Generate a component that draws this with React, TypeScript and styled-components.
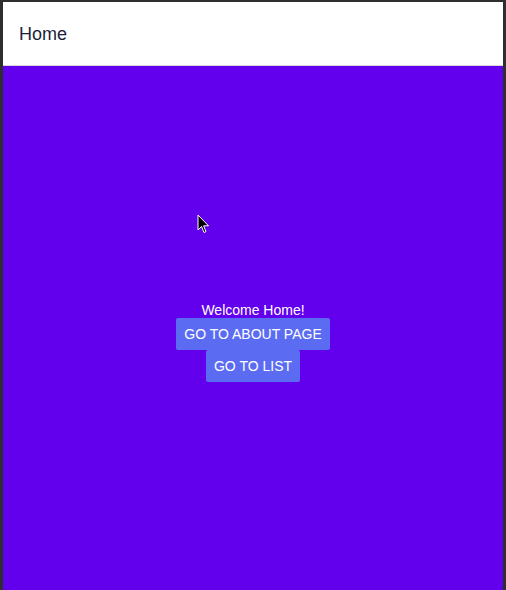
import React from "react";
import styled, { createGlobalStyle } from "styled-components";

const Global = createGlobalStyle`
  html, body { margin: 0; padding: 0; background: #2e2e2e; }
  body { font-family: "Liberation Sans", Arial, sans-serif; }
`;

const Frame = styled.div`
  box-sizing: border-box;
  width: 506px;
  height: 590px;
  padding: 2px 3px 0 3px;
  background: #2e2e2e;
  overflow: hidden;
`;

const Screen = styled.div`
  position: relative;
  display: flex;
  flex-direction: column;
  height: 100%;
  background: #6200ee;
`;

const Header = styled.header`
  box-sizing: border-box;
  height: 64px;
  display: flex;
  align-items: center;
  padding: 2px 16px 0;
  background: #ffffff;
  border-bottom: 1px solid #d8d8d8;
`;

const Title = styled.h1`
  margin: 0;
  font-size: 18px;
  font-weight: 400;
  color: #1b1f3b;
`;

const Content = styled.main`
  flex: 1;
  display: flex;
  flex-direction: column;
  align-items: center;
  padding-top: 236px;
`;

const Welcome = styled.div`
  color: #ffffff;
  font-size: 14px;
  line-height: 16px;
`;

const Button = styled.button`
  box-sizing: border-box;
  height: 32px;
  padding: 0 8px;
  border: none;
  border-radius: 2px;
  background: #5b6cf3;
  color: #ffffff;
  font-family: "Liberation Sans", Arial, sans-serif;
  font-size: 14px;
  text-transform: uppercase;
  cursor: pointer;
`;

const Cursor = styled.svg`
  position: absolute;
  left: 194px;
  top: 212px;
`;

export default function App() {
  return (
    <>
      <Global />
      <Frame>
        <Screen>
          <Header>
            <Title>Home</Title>
          </Header>
          <Content>
            <Welcome>Welcome Home!</Welcome>
            <Button>Go to About Page</Button>
            <Button>Go to List</Button>
          </Content>
          <Cursor width="14" height="20" viewBox="0 0 14 20">
            <path
              d="M1 1 L1 16 L4.5 12.5 L7 18.5 L9 17.6 L6.6 11.8 L11.5 11.8 Z"
              fill="#000"
              stroke="#fff"
              strokeWidth="1"
              strokeLinejoin="miter"
            />
          </Cursor>
        </Screen>
      </Frame>
    </>
  );
}
